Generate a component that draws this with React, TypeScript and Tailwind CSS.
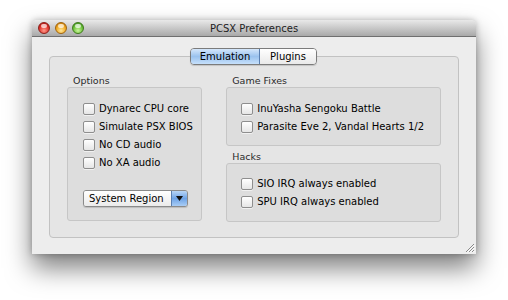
import React from 'react';

const font = { fontFamily: '"Lucida Grande", "DejaVu Sans", sans-serif' };

function Checkbox({ label }: { label: string }) {
  return (
    <div className="flex h-[18px] items-center gap-[4px]">
      <div className="h-[12px] w-[12px] rounded-[2px] border border-[#8e8e8e] bg-gradient-to-b from-white to-[#e6e6e6] shadow-[0_1px_0_rgba(255,255,255,0.6)]" />
      <span className="text-[10px] leading-none text-black">{label}</span>
    </div>
  );
}

function Group({ title, children, className }: { title: string; children: React.ReactNode; className?: string }) {
  return (
    <div className="flex flex-col">
      <div className="h-[13px] pl-[6px] text-[9.5px] leading-[13px] text-[#2a2a2a]">{title}</div>
      <div className={`rounded-[3px] border border-[#c6c6c6] bg-[#dddddd] ${className ?? ''}`}>{children}</div>
    </div>
  );
}

function TrafficLight({ color }: { color: 'red' | 'yellow' | 'green' }) {
  const cls =
    color === 'red'
      ? 'bg-[radial-gradient(circle_at_50%_75%,#ff9a8a_0%,#e0322a_55%,#a3150f_100%)] border-[#8a1f1a]'
      : color === 'yellow'
      ? 'bg-[radial-gradient(circle_at_50%_75%,#ffe79a_0%,#f0a820_55%,#b46a08_100%)] border-[#a0650e]'
      : 'bg-[radial-gradient(circle_at_50%_75%,#c9f59a_0%,#6cc03a_55%,#2f7f14_100%)] border-[#3f7a1c]';
  return (
    <div className={`relative h-[12px] w-[12px] rounded-full border ${cls}`}>
      <div className="absolute left-[2px] top-[1px] h-[4px] w-[6px] rounded-full bg-white/70" />
    </div>
  );
}

export default function App() {
  return (
    <div className="h-[300px] w-[508px] bg-white pl-[32px] pt-[20px]" style={font}>
      <div className="flex h-[234px] w-[444px] flex-col overflow-hidden rounded-t-[5px] bg-[#ededed] shadow-[0_14px_26px_rgba(0,0,0,0.5),0_0_6px_rgba(0,0,0,0.25)]">
        {/* title bar */}
        <div className="relative flex h-[17px] shrink-0 items-center border-b border-[#6f6f6f] bg-gradient-to-b from-[#e9e9e9] to-[#a9a9a9] pl-[6px]">
          <div className="flex gap-[5px]">
            <TrafficLight color="red" />
            <TrafficLight color="yellow" />
            <TrafficLight color="green" />
          </div>
          <div className="absolute inset-0 flex items-center justify-center text-[10px] text-[#222]">PCSX Preferences</div>
        </div>

        {/* content */}
        <div className="relative flex-1 px-[17px] pt-[19px] pb-[16px]">
          {/* segmented tabs */}
          <div className="absolute left-[158px] top-[11px] z-10 flex h-[17px] overflow-hidden rounded-[4px] border border-[#7b7b7b] text-[10px] shadow-[0_1px_1px_rgba(0,0,0,0.15)]">
            <div className="flex w-[69px] items-center justify-center border-r border-[#5a7fb0] bg-gradient-to-b from-[#d5e7fb] via-[#9ac2ee] to-[#c6e0fb] text-black">
              Emulation
            </div>
            <div className="flex w-[56px] items-center justify-center bg-gradient-to-b from-white to-[#e9e9e9] text-black">Plugins</div>
          </div>

          {/* tab box */}
          <div className="flex h-full gap-[24px] rounded-[4px] border border-[#c2c2c2] bg-[#e5e5e5] px-[17px] pt-[17px]">
            <div className="w-[136px]">
              <Group title="Options" className="h-[134px] pl-[15px] pt-[12px]">
                <Checkbox label="Dynarec CPU core" />
                <Checkbox label="Simulate PSX BIOS" />
                <Checkbox label="No CD audio" />
                <Checkbox label="No XA audio" />
                <div className="mt-[18px] flex h-[17px] w-[105px] overflow-hidden rounded-[3px] border border-[#8a8a8a] shadow-[0_1px_1px_rgba(0,0,0,0.15)]">
                  <div className="flex flex-1 items-center bg-gradient-to-b from-white to-[#ebebeb] pl-[5px] text-[10px] text-black">
                    System Region
                  </div>
                  <div className="flex w-[16px] items-center justify-center border-l border-[#5a7fb0] bg-gradient-to-b from-[#b9d6f6] via-[#6ea3e6] to-[#a9cdf5]">
                    <svg width="7" height="5" viewBox="0 0 7 5">
                      <path d="M0 0h7L3.5 5z" fill="#111" />
                    </svg>
                  </div>
                </div>
              </Group>
            </div>
            <div className="flex w-[216px] flex-col">
              <Group title="Game Fixes" className="h-[59px] pl-[14px] pt-[12px]">
                <Checkbox label="InuYasha Sengoku Battle" />
                <Checkbox label="Parasite Eve 2, Vandal Hearts 1/2" />
              </Group>
              <div className="mt-[4px]">
                <Group title="Hacks" className="h-[59px] pl-[14px] pt-[11px]">
                  <Checkbox label="SIO IRQ always enabled" />
                  <Checkbox label="SPU IRQ always enabled" />
                </Group>
              </div>
            </div>
          </div>

          {/* resize grip */}
          <svg className="absolute bottom-[1px] right-[1px]" width="11" height="11" viewBox="0 0 11 11">
            <path d="M10 2L2 10M10 5L5 10M10 8L8 10" stroke="#8a8a8a" strokeWidth="1" />
            <path d="M10.5 3L3 10.5M10.5 6L6 10.5M10.5 9L9 10.5" stroke="#ffffff" strokeWidth="1" />
          </svg>
        </div>
      </div>
    </div>
  );
}
